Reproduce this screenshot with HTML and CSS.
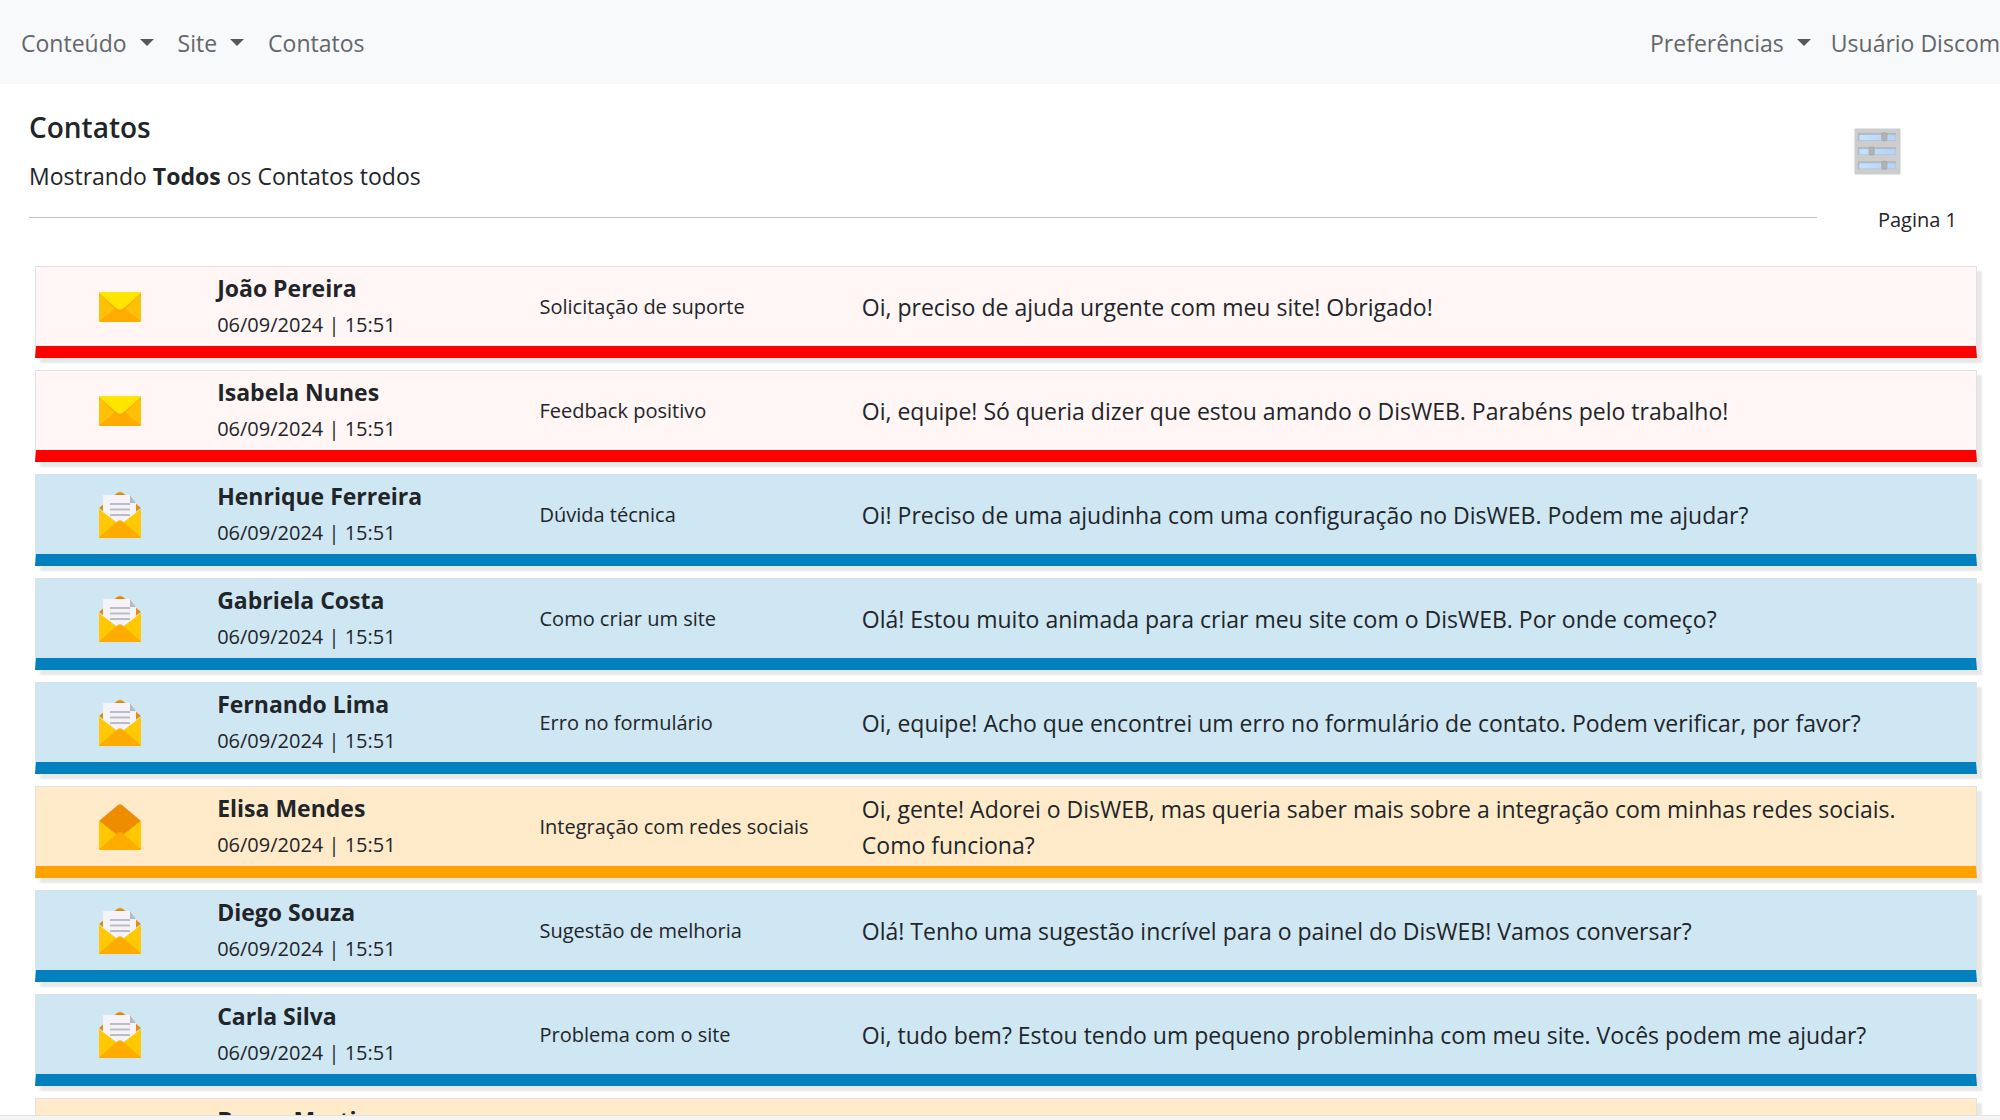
FILE: index.html
```html
<!DOCTYPE html>
<html lang="pt-br">
<head>
    <meta charset="UTF-8">
    <meta name="viewport" content="width=device-width, initial-scale=1.0">
    <title>Contatos</title>
    <link rel="stylesheet" href="styles.css">
</head>
<body>
    <svg class="sprite" aria-hidden="true">
        <symbol id="icon-closed" viewBox="0 0 48 48">
            <rect x="3" y="9" width="42" height="30" rx="1" fill="#ffc107"/>
            <path d="M3 38.500L22 23h4l19 15.500-1 .5H4z" fill="#ffab00"/>
            <path d="M3 10.500l18 16c2 1.800 4 1.800 6 0l18-16V11L27 27.500c-2 1.600-4 1.600-6 0L3 11z" fill="#f5a300"/>
            <path d="M3 10a1 1 0 0 1 1-1h40a1 1 0 0 1 1 1L27 25.500c-2 1.700-4 1.700-6 0z" fill="#ffe500"/>
        </symbol>
        <symbol id="icon-open" viewBox="0 0 48 48">
            <path d="M3 18L22 2c1.300-1 2.700-1 4 0l19 16-19 16h-4z" fill="#ef8d00"/>
            <path d="M3 18l21 16 21-16v28a1 1 0 0 1-1 1H4a1 1 0 0 1-1-1z" fill="#ffc800"/>
            <path d="M3 46.500L22 30c1.300-1 2.700-1 4 0l19 16.500-1 .5H4z" fill="#ffab00"/>
        </symbol>
        <symbol id="icon-letter" viewBox="0 0 48 48">
            <path d="M3 17L21 2c2-1.500 4-1.500 6 0l18 15-19 14h-4z" fill="#e88b0c"/>
            <path d="M7 4h27l6 8v22H7z" fill="#f3f3f8"/>
            <path d="M34 4l6 8h-6z" fill="#b9b9c0"/>
            <path d="M14 13h20M14 18.500h20M14 24h20" stroke="#bcbcc2" stroke-width="2"/>
            <path d="M3 18l21 16 21-16v28a1 1 0 0 1-1 1H4a1 1 0 0 1-1-1z" fill="#ffc800"/>
            <path d="M3 46.500L22 30c1.300-1 2.700-1 4 0l19 16.500-1 .5H4z" fill="#ffab00"/>
        </symbol>
    </svg>

    <nav class="navbar">
        <ul class="nav-list">
            <li><button type="button" class="nav-link dropdown">Conteúdo</button></li>
            <li><button type="button" class="nav-link dropdown">Site</button></li>
            <li><a href="#" class="nav-link">Contatos</a></li>
        </ul>
        <ul class="nav-list nav-user">
            <li><button type="button" class="nav-link dropdown">Preferências</button></li>
            <li><button type="button" class="nav-link dropdown">Usuário Discomp</button></li>
        </ul>
    </nav>

    <main>
        <header class="page-header">
            <div class="page-title">
                <h1>Contatos</h1>
                <p>Mostrando <b>Todos</b> os Contatos todos</p>
            </div>
            <div class="page-tools">
                <button type="button" class="filter" aria-label="Filtros">
                    <svg viewBox="0 0 48 48">
                        <defs>
                            <linearGradient id="track" x1="0" x2="1">
                                <stop offset="0" stop-color="#c3e3ff"/>
                                <stop offset="1" stop-color="#b4d2f5"/>
                            </linearGradient>
                        </defs>
                        <rect x=".5" y=".5" width="47" height="47" rx="1" fill="#cdcdcd"/>
                        <g fill="#b3b8c0">
                            <rect x="4" y="5" width="39" height="8"/>
                            <rect x="4" y="19.500" width="39" height="8"/>
                            <rect x="4" y="34" width="39" height="8"/>
                        </g>
                        <g fill="url(#track)">
                            <rect x="5.500" y="7" width="37" height="5.500"/>
                            <rect x="5.500" y="21.500" width="37" height="5.500"/>
                            <rect x="5.500" y="36" width="37" height="5.500"/>
                        </g>
                        <g fill="#b3b3b3" stroke="#a3a5a8">
                            <rect x="28.500" y="5" width="5" height="8" rx="1"/>
                            <rect x="15.500" y="19.500" width="5" height="8" rx="1"/>
                            <rect x="28.500" y="34" width="5" height="8" rx="1"/>
                        </g>
                    </svg>
                </button>
                <span class="page-number">Pagina 1</span>
            </div>
        </header>

        <ul class="contacts">
            <li class="contact new">
                <svg class="icon"><use href="#icon-closed"/></svg>
                <div class="cell"><strong>João Pereira</strong><small>06/09/2024 | 15:51</small></div>
                <div class="cell subject">Solicitação de suporte</div>
                <div class="cell">Oi, preciso de ajuda urgente com meu site! Obrigado!</div>
            </li>
            <li class="contact new">
                <svg class="icon"><use href="#icon-closed"/></svg>
                <div class="cell"><strong>Isabela Nunes</strong><small>06/09/2024 | 15:51</small></div>
                <div class="cell subject">Feedback positivo</div>
                <div class="cell">Oi, equipe! Só queria dizer que estou amando o DisWEB. Parabéns pelo trabalho!</div>
            </li>
            <li class="contact answered">
                <svg class="icon"><use href="#icon-letter"/></svg>
                <div class="cell"><strong>Henrique Ferreira</strong><small>06/09/2024 | 15:51</small></div>
                <div class="cell subject">Dúvida técnica</div>
                <div class="cell">Oi! Preciso de uma ajudinha com uma configuração no DisWEB. Podem me ajudar?</div>
            </li>
            <li class="contact answered">
                <svg class="icon"><use href="#icon-letter"/></svg>
                <div class="cell"><strong>Gabriela Costa</strong><small>06/09/2024 | 15:51</small></div>
                <div class="cell subject">Como criar um site</div>
                <div class="cell">Olá! Estou muito animada para criar meu site com o DisWEB. Por onde começo?</div>
            </li>
            <li class="contact answered">
                <svg class="icon"><use href="#icon-letter"/></svg>
                <div class="cell"><strong>Fernando Lima</strong><small>06/09/2024 | 15:51</small></div>
                <div class="cell subject">Erro no formulário</div>
                <div class="cell">Oi, equipe! Acho que encontrei um erro no formulário de contato. Podem verificar, por favor?</div>
            </li>
            <li class="contact read">
                <svg class="icon"><use href="#icon-open"/></svg>
                <div class="cell"><strong>Elisa Mendes</strong><small>06/09/2024 | 15:51</small></div>
                <div class="cell subject">Integração com redes sociais</div>
                <div class="cell">Oi, gente! Adorei o DisWEB, mas queria saber mais sobre a integração com minhas redes sociais. Como funciona?</div>
            </li>
            <li class="contact answered">
                <svg class="icon"><use href="#icon-letter"/></svg>
                <div class="cell"><strong>Diego Souza</strong><small>06/09/2024 | 15:51</small></div>
                <div class="cell subject">Sugestão de melhoria</div>
                <div class="cell">Olá! Tenho uma sugestão incrível para o painel do DisWEB! Vamos conversar?</div>
            </li>
            <li class="contact answered">
                <svg class="icon"><use href="#icon-letter"/></svg>
                <div class="cell"><strong>Carla Silva</strong><small>06/09/2024 | 15:51</small></div>
                <div class="cell subject">Problema com o site</div>
                <div class="cell">Oi, tudo bem? Estou tendo um pequeno probleminha com meu site. Vocês podem me ajudar?</div>
            </li>
            <li class="contact read">
                <svg class="icon"><use href="#icon-open"/></svg>
                <div class="cell"><strong>Bruno Martins</strong><small>06/09/2024 | 15:51</small></div>
            </li>
        </ul>
    </main>
    <footer></footer>
</body>
</html>
```

FILE: styles.css
```css
* {
    box-sizing: border-box;
}

body {
    margin: 0;
    height: 100vh;
    display: flex;
    flex-direction: column;
    overflow: hidden;
    font-family: "Segoe UI", "Open Sans", sans-serif;
    font-size: 23px;
    line-height: 36px;
    color: #212529;
    background-color: #fff;
}

h1, p, ul {
    margin: 0;
    padding: 0;
}

ul {
    list-style: none;
}

button {
    padding: 0;
    border: 0;
    background: none;
    font: inherit;
    cursor: pointer;
}

.sprite {
    display: none;
}

.navbar {
    flex-shrink: 0;
    display: flex;
    justify-content: space-between;
    padding: 25px 0 23px 21px;
    background-color: #f8f9fb;
}

.nav-list {
    display: flex;
    gap: 24px;
    white-space: nowrap;
}

.nav-user {
    gap: 20px;
    width: 350px;
}

.nav-link {
    display: block;
    color: #63666a;
    text-decoration: none;
}

.dropdown::after {
    content: "";
    display: inline-block;
    margin-left: 13px;
    vertical-align: 6px;
    border-top: 7px solid #55585b;
    border-left: 7px solid transparent;
    border-right: 7px solid transparent;
}

main {
    flex: 1;
    min-height: 0;
    overflow: hidden;
}

.page-header {
    display: flex;
    gap: 37px;
    padding: 25px 43px 24px 29px;
}

.page-title {
    flex: 1;
    padding-bottom: 23px;
    border-bottom: 1px solid #c0c2c4;
    margin-bottom: 24px;
}

h1 {
    margin-bottom: 13px;
    font-size: 28px;
    font-weight: 600;
}

.page-tools {
    width: 103px;
    padding-top: 19px;
}

.filter, .filter svg {
    display: block;
    width: 47px;
    height: 47px;
}

.page-number {
    display: block;
    margin-top: 27px;
    font-size: 20px;
    text-align: right;
}

.contacts {
    display: flex;
    flex-direction: column;
    gap: 12px;
    padding: 0 23px 0 35px;
}

.contact {
    display: grid;
    grid-template-columns: 1fr 2fr 2fr 7fr;
    align-items: center;
    flex-shrink: 0;
    min-height: 92px;
    padding: 3px 3px 2px;
    border: 1px solid #dee2e6;
    border-bottom-width: 12px;
    box-shadow: 5px 5px 2px #e8e8e8;
}

.contact.new {
    background-color: #fff6f5;
    border-bottom-color: #f00;
}

.contact.answered {
    background-color: #cfe7f3;
    border-bottom-color: #0081bd;
}

.contact.read {
    background-color: #ffebc9;
    border-bottom-color: #ffa200;
}

.icon {
    width: 48px;
    height: 48px;
    margin: 0 auto;
}

.cell {
    padding: 0 17px;
}

.cell strong, .cell small {
    display: block;
}

.cell small, .subject {
    font-size: 20px;
    line-height: 38px;
}

footer {
    flex-shrink: 0;
    height: 5px;
    background-color: #f4f4f4;
    border-top: 1px solid #e2e2e2;
}
```
